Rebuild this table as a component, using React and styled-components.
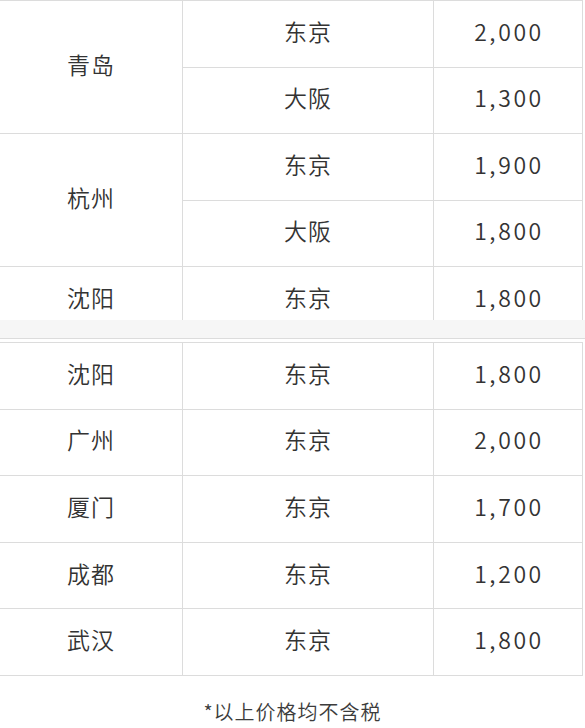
import React from "react";
import styled, { createGlobalStyle } from "styled-components";

const Global = createGlobalStyle`
  html, body {
    margin: 0;
    padding: 0;
    background: #fff;
  }
  body {
    font-family: "Noto Sans CJK SC", "Noto Sans", sans-serif;
    color: #333;
  }
`;

const Page = styled.div`
  width: 585px;
  display: flex;
  flex-direction: column;
`;

const Clip = styled.div`
  height: ${(p) => p.h}px;
  overflow: hidden;
`;

const Table = styled.div`
  display: grid;
  width: 583px;
  grid-template-columns: 182px 251px 150px;
  grid-auto-rows: ${(p) => p.rowH}px;
  border-top: 1px solid #dcdcdc;
`;

const Cell = styled.div`
  box-sizing: border-box;
  display: flex;
  align-items: center;
  justify-content: center;
  padding-bottom: 5px;
  border-bottom: 1px solid #dcdcdc;
  border-left: ${(p) => (p.first ? "none" : "1px solid #dcdcdc")};
  border-right: ${(p) => (p.last ? "1px solid #dcdcdc" : "none")};
  grid-row: ${(p) => (p.span ? `span ${p.span}` : "auto")};
  grid-column: ${(p) => p.col};
  font-size: 23px;
  font-weight: 350;
  line-height: 1;
  letter-spacing: ${(p) => (p.num ? "2.6px" : "1px")};
  padding-left: ${(p) => (p.num ? "2px" : "0")};
`;

const Band = styled.div`
  height: 18px;
  background: #f6f6f6;
  border-bottom: 1px solid #dcdcdc;
  margin-bottom: 3px;
`;

const Note = styled.div`
  margin-top: 26px;
  text-align: center;
  font-size: 20px;
  font-weight: 350;
  line-height: 1;
  letter-spacing: 1px;
  color: #3c3c3c;
`;

const top = [
  { city: "青岛", routes: [["东京", "2,000"], ["大阪", "1,300"]] },
  { city: "杭州", routes: [["东京", "1,900"], ["大阪", "1,800"]] },
  { city: "沈阳", routes: [["东京", "1,800"]] },
];

const bottom = [
  { city: "沈阳", routes: [["东京", "1,800"]] },
  { city: "广州", routes: [["东京", "2,000"]] },
  { city: "厦门", routes: [["东京", "1,700"]] },
  { city: "成都", routes: [["东京", "1,200"]] },
  { city: "武汉", routes: [["东京", "1,800"]] },
];

const Rows = ({ data }) =>
  data.map((g) => (
    <React.Fragment key={g.city + g.routes.length}>
      <Cell first col={1} span={g.routes.length}>
        {g.city}
      </Cell>
      {g.routes.map(([dest, price], i) => (
        <React.Fragment key={i}>
          <Cell col={2}>{dest}</Cell>
          <Cell col={3} last num>
            {price}
          </Cell>
        </React.Fragment>
      ))}
    </React.Fragment>
  ));

export default function App() {
  return (
    <>
      <Global />
      <Page>
        <Clip h={320}>
          <Table rowH={66.5}>
            <Rows data={top} />
          </Table>
        </Clip>
        <Band />
        <Table rowH={66.6}>
          <Rows data={bottom} />
        </Table>
        <Note>*以上价格均不含税</Note>
      </Page>
    </>
  );
}
